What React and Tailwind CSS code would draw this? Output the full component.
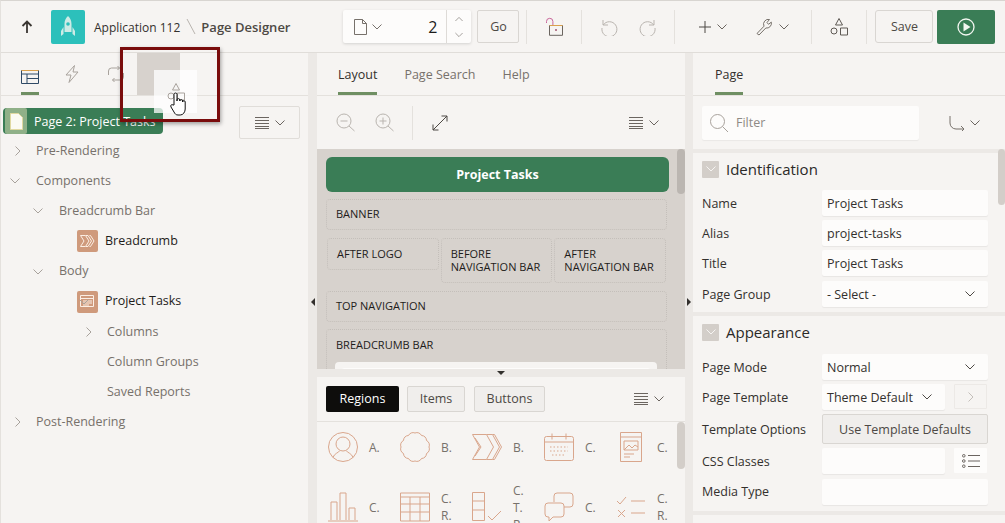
import React from "react";

const S = ({ w = 20, h = 20, vb = "0 0 20 20", children, className = "", sw = 1 }) => (
  <svg width={w} height={h} viewBox={vb} fill="none" stroke="currentColor" strokeWidth={sw} className={"shrink-0 " + className}>{children}</svg>
);
const Chev = ({ className = "text-[#6b6560]", w = 10 }) => (
  <S w={w} h={6} vb="0 0 10 6" className={className}><path d="M.5.500 5 5 9.500.500" /></S>
);
const ChevR = ({ className = "text-[#a8a29c]" }) => (
  <S w={6} h={10} vb="0 0 6 10" className={className}><path d="M.5.500 5 5 .500 9.500" /></S>
);
const Menu = () => (
  <div className="flex items-center gap-[6px] text-[#6b6560]">
    <S w={14} h={12} vb="0 0 14 12"><path d="M0 .5h14M0 3.500h14M0 6.500h14M0 9.500h14M0 11.500h14" /></S>
    <Chev />
  </div>
);
const Divider = ({ h = "h-[34px]" }) => <div className={"w-px bg-[#e4e1dd] " + h} />;
const Tab = ({ active, children, className = "" }) => (
  <div className={"h-full flex items-center border-b-[3px] pt-[5px] " + (active ? "border-[#6f8f63] text-[#33302d] " : "border-transparent text-[#77716b] ") + className}>{children}</div>
);

const TreeRow = ({ indent, arrow, icon, dark, children }) => (
  <div className={"h-[30.15px] flex items-center relative " + (dark ? "text-[#1e1c1a]" : "text-[#77716b]")} style={{ paddingLeft: indent }}>
    {arrow === "r" && <span className="absolute" style={{ left: indent - 21 }}><ChevR /></span>}
    {arrow === "d" && <span className="absolute" style={{ left: indent - 26 }}><Chev className="text-[#a8a29c]" /></span>}
    {icon}
    <span>{children}</span>
  </div>
);

const IconBox = ({ children }) => (
  <div className="w-[21px] h-[22px] rounded-[2px] bg-[#cf9a7c] flex items-center justify-center mr-[7px] -ml-[28px] text-[#fbeee4]">{children}</div>
);

const LayoutSlot = ({ className = "", children }) => (
  <div className={"border border-dotted border-[#c4bfba] rounded-[4px] text-[11px] leading-[13px] text-[#1e1c1a] " + className}>{children}</div>
);

const Prop = ({ label, children, h = "h-[30px]" }) => (
  <div className={"flex items-center " + h}>
    <div className="w-[129px] pl-[9px] pt-[2px] text-[#33302d] shrink-0 whitespace-nowrap">{label}</div>
    <div className="flex-1 flex min-w-0">{children}</div>
  </div>
);
const Field = ({ children, arrow, className = "flex-1" }) => (
  <div className={"h-[26px] bg-[#fdfcfb] rounded-[2px] shadow-[0_1px_1px_rgba(0,0,0,0.06)] flex items-center justify-between pl-[5px] pr-[13px] text-[#33302d] " + className}>
    <span className="pt-[2px]">{children}</span>
    {arrow && <Chev className="text-[#4d4944]" />}
  </div>
);
const Section = ({ title, children, className = "" }) => (
  <div className={"bg-[#f6f4f2] shrink-0 " + className}>
    <div className="h-[32px] flex items-center pl-[9px] gap-[7px]">
      <div className="w-[17px] h-[17px] bg-[#d3cec9] rounded-[1px] flex items-center justify-center"><Chev className="text-[#f6f4f2]" /></div>
      <span className="text-[15px] text-[#2b2927]">{title}</span>
    </div>
    {children}
  </div>
);

const Pal = ({ icon, label }) => (
  <div className="w-[72px] flex items-center shrink-0">
    <div className="w-[48px] pr-[4px] flex justify-center text-[#d9a68c]">{icon}</div>
    <div className="text-[12px] leading-[17px] text-[#77716b]">{label}</div>
  </div>
);

const Btn = ({ children, className = "" }) => (
  <div className={"h-[33px] border border-[#d9d6d2] rounded-[2px] flex items-center justify-center text-[#4d4944] pt-[2px] " + className}>{children}</div>
);

const Shapes = () => (
  <S w={18} h={18} vb="0 0 18 18"><path d="M9 .5 12.500 7h-7z" /><circle cx="4" cy="13" r="3" /><path d="M10.500 10h7v7h-7z" /></S>
);

export default function App() {
  return (
    <div className="w-[1005px] h-[523px] overflow-hidden relative bg-[#ece9e6] text-[12.5px] flex flex-col border-t border-[#d8d5d1] border-l border-l-[#e4e1dd]" style={{ fontFamily: '"Open Sans", sans-serif' }}>
      {/* Top bar */}
      <div className="h-[52px] shrink-0 bg-[#f6f4f2] border-b border-[#e0ddd9] flex items-center pl-[19px]">
        <S w={14} h={14} vb="0 0 14 14" sw={1.8} className="text-[#3a3632]"><path d="M7 13V1.500M2.500 6 7 1.500 11.500 6" /></S>
        <div className="ml-[17px] w-[34px] h-[34px] bg-[#2cc0bb] rounded-[2px] flex items-center justify-center">
          <svg width="16" height="24" viewBox="0 0 16 24" fill="#cdebe6"><path d="M8 1c2.500 2 3.500 5 3.500 8v8h-7V9C4.500 6 5.500 3 8 1zM3.500 12v7L1 21v-5zM12.500 12v7l2.500 2v-5z" /><circle cx="8" cy="9" r="1.800" fill="#2cc0bb" /></svg>
        </div>
        <span className="ml-[9px] text-[12px] text-[#33302d] pt-[2px] whitespace-nowrap">Application 112</span>
        <S w={10} h={18} vb="0 0 10 18" className="ml-[6px] text-[#b9b4af]"><path d="M1 1l8 15" /></S>
        <span className="ml-[5px] text-[13px] font-semibold text-[#4d4944] pt-[2px] whitespace-nowrap">Page Designer</span>

        <div className="ml-[53px] w-[128px] h-[33px] bg-[#fdfcfb] rounded-[2px] shadow-[0_1px_3px_rgba(0,0,0,0.14)] flex items-center pl-[11px]">
          <S w={13} h={16} vb="0 0 13 16" className="text-[#77716b]"><path d="M.5.500h8l4 4v11H.500zM8.500.500v4h4" /></S>
          <Chev className="ml-[5px] text-[#77716b]" />
          <span className="ml-auto mr-[9px] text-[16px] text-[#1e1c1a]">2</span>
          <div className="w-[25px] h-full border-l border-[#dedbd7] flex flex-col items-center justify-center gap-[10px]">
            <Chev className="rotate-180 text-[#8f8a85]" w={8} />
            <Chev className="text-[#8f8a85]" w={8} />
          </div>
        </div>
        <Btn className="ml-[6px] w-[42px]">Go</Btn>
        <div className="ml-[7px]"><Divider /></div>
        <div className="w-[54px] flex justify-center">
          <svg width="18" height="19" viewBox="0 0 18 19" fill="none"><path d="M1.500 6V4.500a3.200 3.200 0 0 1 6.400 0V8" stroke="#c9669a" /><path d="M4.500 8.500h13v9.800h-13z" stroke="#6b6560" /><path d="M4.500 8.500h13" stroke="#d9a04c" /><circle cx="11" cy="13" r="1" fill="#a0566e" /></svg>
        </div>
        <Divider />
        <div className="ml-[18px] flex gap-[21px] text-[#b9b4af]">
          <S w={18} h={18} vb="0 0 18 18"><path d="M3 2v5h5M3.200 7A7.500 7.500 0 1 1 2 10" /></S>
          <S w={18} h={18} vb="0 0 18 18"><path d="M15 2v5h-5M14.800 7A7.500 7.500 0 1 0 16 10" /></S>
        </div>
        <div className="ml-[17px]"><Divider /></div>
        <div className="w-[76px] flex items-center justify-center gap-[6px] text-[#4d4944]">
          <S w={12} h={12} vb="0 0 12 12"><path d="M6 0v12M0 6h12" /></S>
          <Chev />
        </div>
        <div className="w-[60px] pl-[5px] flex items-center gap-[5px] text-[#77716b]">
          <S w={18} h={18} vb="0 0 18 18"><path d="M1 15.500 8 8.200a4.800 4.800 0 0 1 5.500-6.700l-2.500 3 1.500 1.800 2.800-2.200A4.800 4.800 0 0 1 9.800 10L3 17z" /></S>
          <Chev />
        </div>
        <Divider />
        <div className="w-[54px] flex justify-center text-[#5f5a55]"><Shapes /></div>
        <Divider />
        <Btn className="ml-[8px] w-[58px] rounded-[3px]">Save</Btn>
        <div className="ml-[4px] w-[58px] h-[34px] bg-[#3a7d56] rounded-[2px] flex items-center justify-center">
          <svg width="18" height="18" viewBox="0 0 18 18" fill="none"><circle cx="9" cy="9" r="8" stroke="#f3f7f1" strokeWidth="1.300" /><path d="M6.500 4.500 13.500 9l-7 4.500z" fill="#f3f7f1" /></svg>
        </div>
      </div>

      <div className="flex-1 flex min-h-0">
        {/* Left pane */}
        <div className="w-[307px] shrink-0 bg-[#f6f4f2] flex flex-col">
          <div className="h-[43px] shrink-0 border-b border-[#e4e1dd] flex items-center pl-[20px] gap-[26px]">
            <div className="h-full flex flex-col justify-end items-center">
              <svg width="18" height="14" viewBox="0 0 18 14" fill="none" className="mb-[8px]"><path d="M.5.500h17v13H.500zM.5 4h17M6 4v9.500M6 8.500h11.500" stroke="#2f4a66" /><path d="M.5.500h17" stroke="#d9a04c" /></svg>
              <div className="w-[18px] h-[3px] bg-[#6f8f63]" />
            </div>
            <div className="mb-[1px] text-[#a8a29c]"><S w={14} h={18} vb="0 0 14 18"><path d="M9.500.500 1 10h5l-2 7.500L13 7H8z" /></S></div>
            <div className="mb-[1px] ml-[2px] text-[#a8a29c]"><S w={18} h={18} vb="0 0 18 18"><path d="M1.500 10V6a3 3 0 0 1 3-3h8M10.500 1 12.500 3l-2 2M16.500 8v4a3 3 0 0 1-3 3h-8M7.500 13l-2 2 2 2" /></S></div>
          </div>
          <div className="flex-1 relative pt-[12px]">
            <div className="absolute right-[8px] top-[10px] w-[61px] h-[33px] border border-[#e0ddd9] rounded-[2px] flex items-center justify-center"><Menu /></div>
            <div className="ml-[2px] w-[160px] h-[26px] bg-[#3a7d56] rounded-[4px] flex items-center text-white whitespace-nowrap pl-[2px]">
              <div className="w-[22px] h-full bg-[#8fb088] rounded-[2px] flex items-center justify-center mr-[7px]">
                <svg width="13" height="17" viewBox="0 0 13 17" fill="#fbfaf2" stroke="#e0d9a0"><path d="M.5.500h8l4 4v12H.500z" /></svg>
              </div>
              <span className="pt-[2px]">Page 2: Project Tasks</span>
            </div>
            <div className="pt-[2px]">
              <TreeRow indent={35} arrow="r">Pre-Rendering</TreeRow>
              <TreeRow indent={35} arrow="d">Components</TreeRow>
              <TreeRow indent={58} arrow="d">Breadcrumb Bar</TreeRow>
              <TreeRow indent={104} dark icon={<IconBox><S w={15} h={12} vb="0 0 15 12"><path d="M.5.500h5l3.500 5.500-3.500 5.500h-5l3.500-5.500zM6 .5h2l3.500 5.500L8 11.500H6M9.500.500h1L14 6l-3.500 5.500h-1" /></S></IconBox>}>Breadcrumb</TreeRow>
              <TreeRow indent={58} arrow="d">Body</TreeRow>
              <TreeRow indent={104} dark arrow="d" icon={<IconBox><S w={15} h={14} vb="0 0 15 14"><path d="M.5.500h13v11H.500zM.5 3.500h13M3 6h9M3 8h9M3 10h6" /></S></IconBox>}>Project Tasks</TreeRow>
              <TreeRow indent={106} arrow="r">Columns</TreeRow>
              <TreeRow indent={106}>Column Groups</TreeRow>
              <TreeRow indent={106}>Saved Reports</TreeRow>
              <TreeRow indent={35} arrow="r">Post-Rendering</TreeRow>
            </div>
          </div>
        </div>

        {/* Gutter */}
        <div className="w-[9px] shrink-0 flex items-center justify-center pt-[28px]">
          <div className="w-0 h-0 border-y-[4px] border-y-transparent border-r-[4px] border-r-[#33302d]" />
        </div>

        {/* Middle pane */}
        <div className="w-[368px] shrink-0 flex flex-col">
          <div className="h-[43px] shrink-0 bg-[#f6f4f2] border-b border-[#e4e1dd] flex items-center gap-[27px] pl-[21px]">
            <Tab active>Layout</Tab>
            <Tab>Page Search</Tab>
            <Tab>Help</Tab>
          </div>
          <div className="h-[53px] shrink-0 bg-[#f6f4f2] flex items-center pl-[19px] pr-[26px] text-[#b9b4af]">
            <S w={19} h={19} vb="0 0 19 19"><circle cx="8" cy="8" r="7" /><path d="M4.500 8h7M13 13l5.500 5" /></S>
            <S w={19} h={19} vb="0 0 19 19" className="ml-[20px]"><circle cx="8" cy="8" r="7" /><path d="M4.500 8h7M8 4.500v7M13 13l5.500 5" /></S>
            <div className="ml-[18px]"><Divider /></div>
            <S w={16} h={16} vb="0 0 16 16" className="ml-[19px] text-[#4d4944]"><path d="M1 15 15 1M9.500 1H15v5.500M1 9.500V15h5.500" /></S>
            <div className="ml-auto"><Menu /></div>
          </div>
          {/* Canvas */}
          <div className="h-[220px] shrink-0 bg-[#d7d2cd] relative overflow-hidden pl-[9px] pr-[18px] pt-[8px]">
            <div className="absolute right-0 top-0 w-[8px] h-[45px] bg-[#bbb6b1] rounded-[4px]" />
            <div className="h-[35px] bg-[#3a7d56] rounded-[6px] flex items-center justify-center text-white font-bold -mr-[2px] pt-[2px]">Project Tasks</div>
            <LayoutSlot className="mt-[7px] h-[31px] flex items-center pl-[9px] pb-[2px]">BANNER</LayoutSlot>
            <div className="mt-[8px] flex gap-[2px] items-start px-[1px]">
              <LayoutSlot className="flex-1 h-[32px] flex items-center pl-[9px] pb-[2px]">AFTER LOGO</LayoutSlot>
              <LayoutSlot className="flex-1 h-[45px] flex items-center pl-[9px] pb-[2px]"><div>BEFORE<br />NAVIGATION BAR</div></LayoutSlot>
              <LayoutSlot className="flex-1 h-[45px] flex items-center pl-[9px] pb-[2px]"><div>AFTER<br />NAVIGATION BAR</div></LayoutSlot>
            </div>
            <LayoutSlot className="mt-[8px] h-[31px] flex items-center pl-[9px] pb-[2px]">TOP NAVIGATION</LayoutSlot>
            <LayoutSlot className="mt-[7px] h-[60px] pl-[9px] pt-[8px]">
              BREADCRUMB BAR
              <div className="mt-[11px] -ml-[1px] mr-[9px] h-[20px] bg-[#f6f4f2] rounded-[4px] p-[6px]"><div className="h-[20px] bg-[#fdfcfb] rounded-[4px]" /></div>
            </LayoutSlot>
          </div>
          <div className="h-[8px] shrink-0 flex items-center justify-center">
            <div className="w-0 h-0 border-x-[4px] border-x-transparent border-t-[4px] border-t-[#33302d]" />
          </div>
          {/* Palette */}
          <div className="flex-1 bg-[#f6f4f2] flex flex-col min-h-0 overflow-hidden">
            <div className="h-[45px] shrink-0 border-b border-[#e4e1dd] flex items-center pl-[9px] pr-[21px]">
              <div className="w-[73px] h-[26px] bg-[#0e0d0c] rounded-[2px] text-white flex items-center justify-center pt-[1px]">Regions</div>
              <div className="ml-[8px] w-[58px] h-[26px] bg-[#f0eeec] border border-[#d9d6d2] rounded-[2px] flex items-center justify-center text-[#4d4944] pt-[1px]">Items</div>
              <div className="ml-[9px] w-[71px] h-[26px] bg-[#f0eeec] border border-[#d9d6d2] rounded-[2px] flex items-center justify-center text-[#4d4944] pt-[1px]">Buttons</div>
              <div className="ml-auto"><Menu /></div>
            </div>
            <div className="relative flex-1 overflow-hidden">
              <div className="absolute right-0 top-0 w-[8px] h-[47px] bg-[#d3cec9] rounded-[4px]" />
              <div className="flex pl-[4px] h-[50px] items-center">
                <Pal label="A." icon={<S w={30} h={30} vb="0 0 30 30"><circle cx="15" cy="15" r="14.500" /><circle cx="15" cy="12" r="7" /><path d="M5 25.500c1-4 6-5 7-7M25 25.500c-1-4-6-5-7-7" /></S>} />
                <Pal label="B." icon={<S w={30} h={30} vb="0 0 30 30"><path d="M15 1a5 5 0 0 1 6.500 2.500a5 5 0 0 1 5 5a5 5 0 0 1 2.500 6.500a5 5 0 0 1-2.500 6.500a5 5 0 0 1-5 5a5 5 0 0 1-6.500 2.500a5 5 0 0 1-6.500-2.500a5 5 0 0 1-5-5a5 5 0 0 1-2.500-6.500a5 5 0 0 1 2.500-6.500a5 5 0 0 1 5-5a5 5 0 0 1 6.500-2.500z" /></S>} />
                <Pal label="B." icon={<S w={30} h={26} vb="0 0 30 26"><path d="M.5.500h14l7 12.500-7 12.500H.500l7-12.500zM14.500.5h6l7 12.500-7 12.500h-6M20.500.5h2l7 12.500-7 12.500h-2M3 22l6-9-6-9" /></S>} />
                <Pal label="C." icon={<S w={30} h={28} vb="0 0 30 28"><rect x=".5" y="3.500" width="29" height="24" rx="2" /><path d="M.5 9h29M8 .5v6M22 .5v6" /><path d="M6 14h18M6 18h18M8 22h14" strokeDasharray="1.500 2" /></S>} />
                <Pal label="C." icon={<S w={22} h={30} vb="0 0 22 30"><path d="M.5.500h21v29H.500zM.5 5h21M4 9h14v9H4zM4 18l5-5 3 3 3-3 3 2M4 22h10M4 25h6" /></S>} />
              </div>
              <div className="flex pl-[4px] h-[70px] items-center">
                <Pal label="C." icon={<S w={30} h={30} vb="0 0 30 30"><path d="M3 28V10h6v18M12 28V1h6v27M21 28V16h6v12M0 29h30" /></S>} />
                <Pal label={<>C.<br />R.</>} icon={<S w={30} h={30} vb="0 0 30 30"><path d="M.5 1h29v28H.500zM.5 5h29M.5 12h29M.5 20h29M10 5v24M20 5v24" /></S>} />
                <Pal label={<>C.<br />T.<br />R.</>} icon={<S w={30} h={30} vb="0 0 30 30"><path d="M.5.500h12v28H.500zM.5 9h12M.5 18h12M16 24l4 4 9-9" /></S>} />
                <Pal label="C." icon={<S w={30} h={30} vb="0 0 30 30"><path d="M10 10V4a3 3 0 0 1 3-3h13a3 3 0 0 1 3 3v8a3 3 0 0 1-3 3h-6M4 11h13a3 3 0 0 1 3 3v8a3 3 0 0 1-3 3H9l-4 4v-4H4a3 3 0 0 1-3-3v-8a3 3 0 0 1 3-3z" /></S>} />
                <Pal label={<>C.<br />R.</>} icon={<S w={30} h={24} vb="0 0 30 24"><path d="M1 6l3 3 6-7M15 6h14M2 15l7 7M9 15l-7 7M15 18h14" /></S>} />
              </div>
            </div>
          </div>
        </div>

        {/* Gutter */}
        <div className="w-[8px] shrink-0 flex items-center justify-center pt-[28px]">
          <div className="w-0 h-0 border-y-[4px] border-y-transparent border-l-[4px] border-l-[#33302d]" />
        </div>

        {/* Right pane */}
        <div className="flex-1 flex flex-col min-w-0">
          <div className="h-[43px] shrink-0 bg-[#f6f4f2] border-b border-[#e4e1dd] flex items-center pl-[22px]">
            <Tab active>Page</Tab>
          </div>
          <div className="h-[53px] shrink-0 bg-[#f6f4f2] flex items-center pl-[9px] pr-[25px]">
            <div className="w-[217px] h-[34px] bg-[#fdfcfb] rounded-[2px] shadow-[0_1px_1px_rgba(0,0,0,0.05)] flex items-center pl-[8px] text-[#8f8a85]">
              <S w={18} h={18} vb="0 0 18 18" className="text-[#a8a29c] mr-[8px]"><circle cx="7.500" cy="7.500" r="7" /><path d="M12.500 12.500 18 18" /></S>
              <span className="pt-[2px]">Filter</span>
            </div>
            <div className="ml-auto flex items-center gap-[5px] text-[#77716b]">
              <S w={16} h={16} vb="0 0 16 16"><path d="M1 1v7a6 6 0 0 0 6 6h8M12 11l3 3-3 3" /></S>
              <Chev />
            </div>
          </div>
          <div className="flex-1 relative overflow-hidden flex flex-col gap-[4px] pt-[4px]">
            <div className="absolute right-0 top-0 w-[7px] h-[56px] bg-[#d3cec9] rounded-[4px] z-10" />
            <Section title="Identification" className="pb-[2px]">
              <div className="pt-[3px]">
                <Prop label="Name"><Field className="w-[166px] flex-none">Project Tasks</Field></Prop>
                <Prop label="Alias"><Field className="w-[166px] flex-none">project-tasks</Field></Prop>
                <Prop label="Title"><Field className="w-[166px] flex-none">Project Tasks</Field></Prop>
                <Prop label="Page Group" h="h-[32px]"><Field arrow className="w-[166px] flex-none">- Select -</Field></Prop>
              </div>
            </Section>
            <Section title="Appearance" className="pb-[4px]">
              <div className="pt-[4px]">
                <Prop label="Page Mode"><Field arrow className="w-[166px] flex-none">Normal</Field></Prop>
                <Prop label="Page Template">
                  <Field arrow className="w-[123px] flex-none">Theme Default</Field>
                  <div className="ml-[9px] w-[33px] h-[25px] border border-[#ece9e6] rounded-[1px] bg-[#f6f4f2] flex items-center justify-center"><ChevR className="text-[#c4bfba]" /></div>
                </Prop>
                <Prop label="Template Options" h="h-[34px]">
                  <div className="w-[166px] h-[30px] bg-[#f0eeec] border border-[#d9d6d2] rounded-[2px] flex items-center justify-center text-[#4d4944] pt-[2px]">Use Template Defaults</div>
                </Prop>
                <Prop label="CSS Classes">
                  <Field className="w-[123px] flex-none" />
                  <div className="ml-[9px] w-[33px] h-[25px] bg-[#fdfcfb] rounded-[1px] flex items-center justify-center text-[#6b6560]">
                    <S w={18} h={14} vb="0 0 18 14"><circle cx="1.800" cy="1.800" r="1.300" /><circle cx="1.800" cy="7" r="1.300" /><circle cx="1.800" cy="12.200" r="1.300" /><path d="M6 1.500h12M6 7h12M6 12.500h12" /></S>
                  </div>
                </Prop>
                <Prop label="Media Type" h="h-[31px]"><Field className="w-[166px] flex-none" /></Prop>
              </div>
            </Section>
            <div className="h-[20px] bg-[#f6f4f2] shrink-0" />
          </div>
        </div>
      </div>

      {/* Callout overlay */}
      <div className="absolute left-[136px] top-[52px] w-[43px] h-[42px] bg-[#d7d2cd]" />
      <div className="absolute left-[153px] top-[69px] w-[43px] h-[43px] bg-white/75 flex items-start justify-center pt-[13px] text-[#a8a29c]"><Shapes /></div>
      <div className="absolute left-[119px] top-[46px] w-[100px] h-[75px] border-[3px] border-[#7a0c0c] shadow-[1px_2px_4px_rgba(0,0,0,0.35)]" />
      <svg className="absolute left-[168px] top-[90px]" width="20" height="26" viewBox="0 0 20 26" fill="#fff" stroke="#111" strokeWidth="1">
        <path d="M5 14V3.500a1.500 1.500 0 0 1 3 0V10V9a1.400 1.400 0 0 1 2.800 0v1a1.400 1.400 0 0 1 2.800 0v1a1.300 1.300 0 0 1 2.600 0v7c0 3-2 6-5 6H9c-2 0-3-1-4-3l-3-5c-1-2 1-3 2-2z" />
      </svg>
    </div>
  );
}
